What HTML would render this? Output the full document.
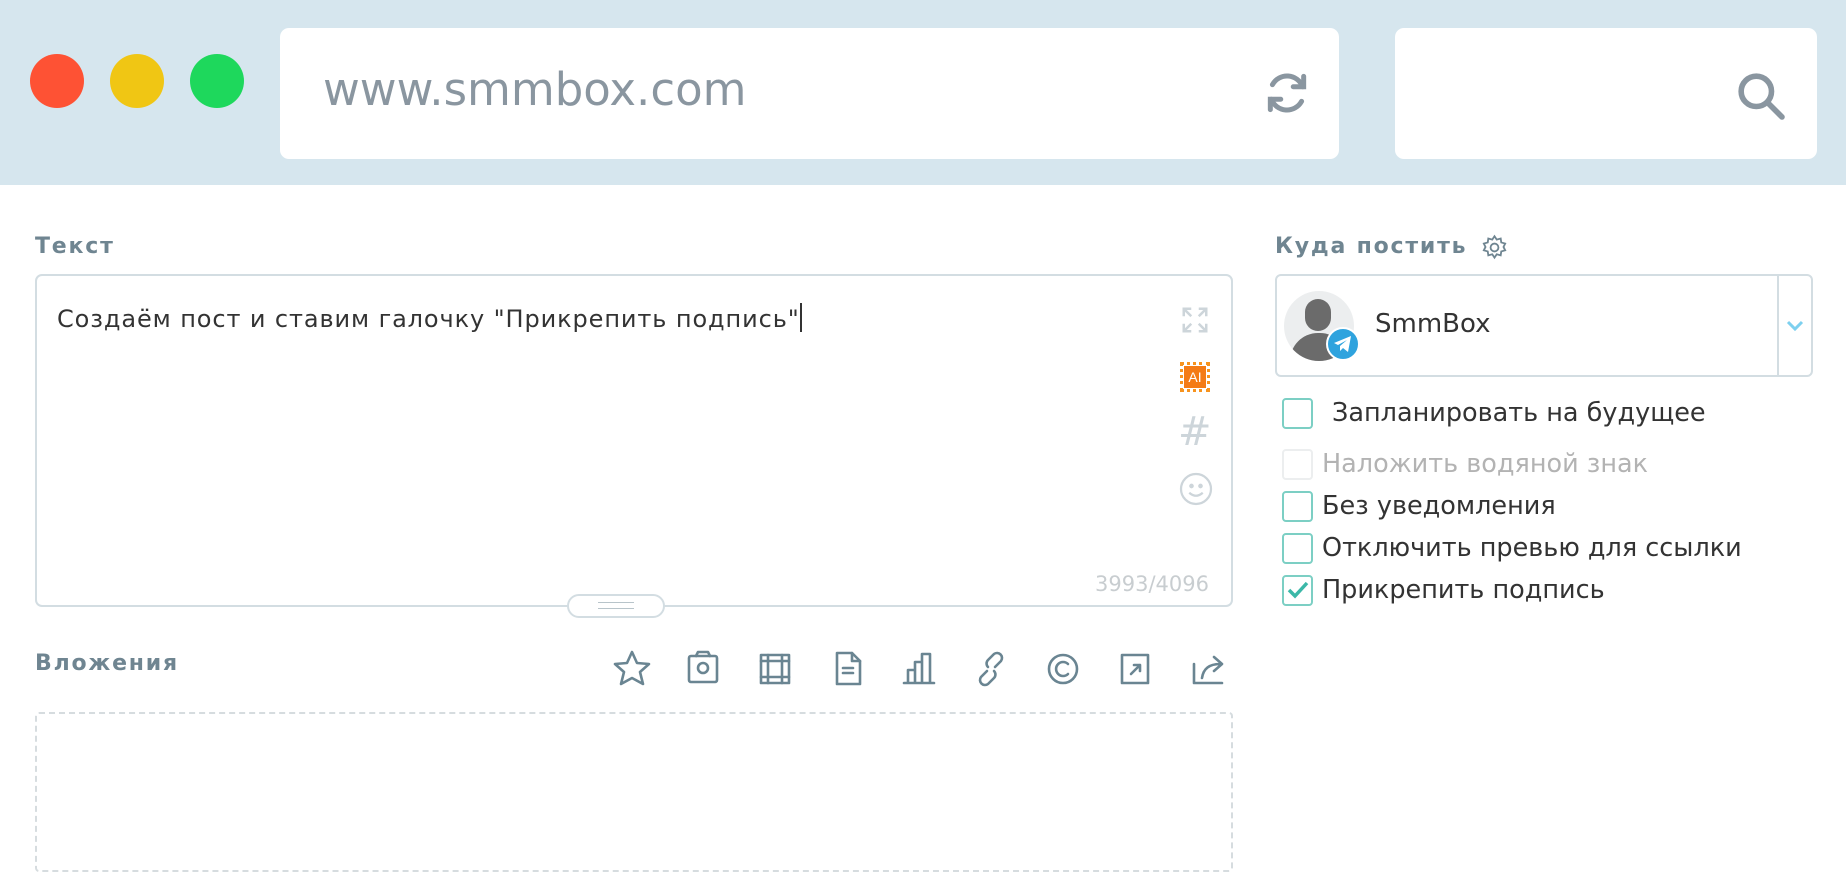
<!DOCTYPE html>
<html><head><meta charset="utf-8"><style>
*{margin:0;padding:0;box-sizing:border-box}
body{width:1846px;height:849px;overflow:hidden;background:#fff;font-family:"DejaVu Sans","Liberation Sans",sans-serif;position:relative}
.a{position:absolute}
.lbl{font-weight:bold;color:#6f8591;font-size:22px;letter-spacing:1.8px}
.cb{position:absolute;left:1282px;width:31px;height:31px;border:2px solid #7ccfc4;border-radius:4px;background:#fff}
.ct{position:absolute;font-size:25.5px;color:#333;line-height:31px}
</style></head><body>
<div class="a" style="left:0;top:0;width:1846px;height:185px;background:#d6e6ee"></div>
<div class="a" style="left:30px;top:54px;width:54px;height:54px;border-radius:50%;background:#fe5234"></div>
<div class="a" style="left:110px;top:54px;width:54px;height:54px;border-radius:50%;background:#f0c614"></div>
<div class="a" style="left:190px;top:54px;width:54px;height:54px;border-radius:50%;background:#1ed85c"></div>
<div class="a" style="left:280px;top:28px;width:1059px;height:131px;background:#fff;border-radius:9px"></div>
<div class="a" style="left:1395px;top:28px;width:422px;height:131px;background:#fff;border-radius:9px"></div>
<div class="a" style="left:323px;top:63px;font-size:45px;color:#8a96a0">www.smmbox.com</div>
<svg class="a" style="left:1262px;top:68px" width="50" height="50" viewBox="0 0 24 24" fill="none" stroke="#8a96a0" stroke-width="2.4" stroke-linecap="round"><path d="M19.5 9A8 8 0 0 0 5 8"/><path d="M20 4v5h-5"/><path d="M4.5 15A8 8 0 0 0 19 16"/><path d="M4 20v-5h5"/></svg>
<svg class="a" style="left:1733px;top:68px" width="56" height="56" viewBox="0 0 24 24" fill="none" stroke="#8a96a0" stroke-width="2.4" stroke-linecap="round"><circle cx="10" cy="10" r="6.5"/><path d="M15 15l6 6"/></svg>

<div class="a lbl" style="left:35px;top:234px">Текст</div>
<div class="a" style="left:35px;top:274px;width:1198px;height:333px;border:2px solid #d3dde2;border-radius:7px"></div>
<div class="a" style="left:57px;top:303px;font-size:24px;color:#333;letter-spacing:0.9px">Создаём пост и ставим галочку "Прикрепить подпись"<span style="display:inline-block;width:2px;height:29px;background:#333;vertical-align:-5px"></span></div>
<svg class="a" style="left:1180px;top:305px" width="30" height="30" viewBox="0 0 24 24" fill="none" stroke="#cdd5da" stroke-width="2"><path d="M3 9V3h6M3 3l6 6M21 9V3h-6M21 3l-6 6M3 15v6h6M3 21l6-6M21 15v6h-6M21 21l-6-6"/></svg>
<div class="a" style="left:1180px;top:362px;width:30px;height:30px;border:3px dotted #f7931e"></div>
<div class="a" style="left:1184px;top:366px;width:22px;height:22px;background:#f47b16;color:#fff;font-size:14px;line-height:22px;text-align:center;font-family:'Liberation Sans',sans-serif">AI</div>
<div class="a" style="left:1178px;top:412px;font-size:40px;color:#cdd5da;line-height:40px">#</div>
<svg class="a" style="left:1178px;top:471px" width="36" height="36" viewBox="0 0 24 24" fill="none" stroke="#cdd5da" stroke-width="1.5"><circle cx="12" cy="12" r="10"/><circle cx="9" cy="10" r=".8" fill="#cdd5da"/><circle cx="15" cy="10" r=".8" fill="#cdd5da"/><path d="M7.5 14.5q4.5 4 9 0"/></svg>
<div class="a" style="right:637px;top:572px;font-size:21px;color:#c8cdd0">3993/4096</div>
<div class="a" style="left:567px;top:594px;width:98px;height:24px;border:2px solid #d3dde2;border-radius:12px;background:#fff"></div>
<div class="a" style="left:598px;top:602px;width:36px;height:7px;border-top:1px solid #b8c4ca;border-bottom:1px solid #b8c4ca"></div>

<div class="a lbl" style="left:35px;top:651px">Вложения</div>
<svg class="a" style="left:610px;top:648px" width="620" height="42" viewBox="0 0 620 42" fill="none" stroke="#6a8592" stroke-width="2.6" stroke-linejoin="round" stroke-linecap="round">
<path d="M22 4l5 11 12 1-9 8 3 12-11-6-11 6 3-12-9-8 12-1z"/>
<g transform="translate(93,0)"><rect x="-14" y="8" width="28" height="26" rx="2"/><path d="M-7 8l2-4h10l2 4"/><circle cx="0" cy="20" r="5"/></g>
<g transform="translate(165,0)"><rect x="-14" y="7" width="28" height="28"/><path d="M-7 7v28M7 7v28M-14 13h28M-14 29h28"/></g>
<g transform="translate(238,0)"><path d="M-11 5h15l8 8v23h-23z"/><path d="M4 5v8h8M-5 20h10M-5 25h10"/></g>
<g transform="translate(309,0)"><path d="M-15 35h30M-11 35v-13h7v13M-4 35v-21h7v21M3 35v-29h8v29"/></g>
<g transform="translate(381,0)"><path d="M-4 23l-6 6a5 5 0 0 0 7 7l6-6a5 5 0 0 0 0-7M4 19l6-6a5 5 0 0 0-7-7l-6 6a5 5 0 0 0 0 7"/></g>
<g transform="translate(453,0)"><circle cx="0" cy="21" r="14"/><path d="M5 16a7 7 0 1 0 0 10"/></g>
<g transform="translate(525,0)"><rect x="-13" y="7" width="26" height="28"/><path d="M-4 26l9-9M-1 17h6v6"/></g>
<g transform="translate(598,0)"><path d="M-14 16v19h28"/><path d="M-6 30q2-14 18-14M6 9l8 7-8 7"/></g>
</svg>
<div class="a" style="left:35px;top:712px;width:1198px;height:160px;border:2px dashed #d6dcdf;border-radius:4px"></div>

<div class="a lbl" style="left:1275px;top:234px">Куда постить</div>
<svg class="a" style="left:1481px;top:234px" width="27" height="27" viewBox="0 0 24 24" fill="none" stroke="#6f8591" stroke-width="1.6"><circle cx="12" cy="12" r="3.5"/><path d="M12 2l2 3 3.5-1 .5 3.5 3.5 1-1.5 3 1.5 3-3.5 1-.5 3.5-3.5-1-2 3-2-3-3.5 1-.5-3.5-3.5-1 1.5-3-1.5-3 3.5-1 .5-3.5 3.5 1z"/></svg>
<div class="a" style="left:1275px;top:274px;width:538px;height:103px;border:2px solid #d3dde2;border-radius:6px"></div>
<div class="a" style="left:1777px;top:276px;width:2px;height:99px;background:#d3dde2"></div>
<svg class="a" style="left:1785px;top:319px" width="20" height="14" viewBox="0 0 20 14" fill="none" stroke="#7dd0ef" stroke-width="3"><path d="M3 3l7 7 7-7"/></svg>
<div class="a" style="left:1284px;top:291px;width:70px;height:70px;border-radius:50%;background:#eceeef;overflow:hidden">
<div class="a" style="left:21px;top:8px;width:26px;height:32px;border-radius:13px;background:#6b6b6b"></div>
<div class="a" style="left:6px;top:42px;width:58px;height:40px;border-radius:28px 28px 0 0;background:#6b6b6b"></div></div>
<div class="a" style="left:1326px;top:327px;width:34px;height:34px;border-radius:50%;background:#2fa3de;border:2px solid #fff"></div>
<svg class="a" style="left:1333px;top:335px" width="20" height="18" viewBox="0 0 20 18"><path d="M1 8l17-7-3 16-5-4-3 3v-5l7-6-9 5z" fill="#fff"/></svg>
<div class="a" style="left:1375px;top:309px;font-size:26px;color:#333">SmmBox</div>

<div class="cb" style="top:398px"></div><div class="ct" style="left:1332px;top:398px">Запланировать на будущее</div>
<div class="cb" style="top:449px;border-color:#eceeef"></div><div class="ct" style="left:1322px;top:449px;color:#b3b3b3">Наложить водяной знак</div>
<div class="cb" style="top:491px"></div><div class="ct" style="left:1322px;top:491px">Без уведомления</div>
<div class="cb" style="top:533px"></div><div class="ct" style="left:1322px;top:533px">Отключить превью для ссылки</div>
<div class="cb" style="top:575px"></div><div class="ct" style="left:1322px;top:575px">Прикрепить подпись</div>
<svg class="a" style="left:1286px;top:579px" width="24" height="22" viewBox="0 0 24 22" fill="none" stroke="#3bb8a8" stroke-width="3.5"><path d="M3 11l6 6L21 4"/></svg>
</body></html>
